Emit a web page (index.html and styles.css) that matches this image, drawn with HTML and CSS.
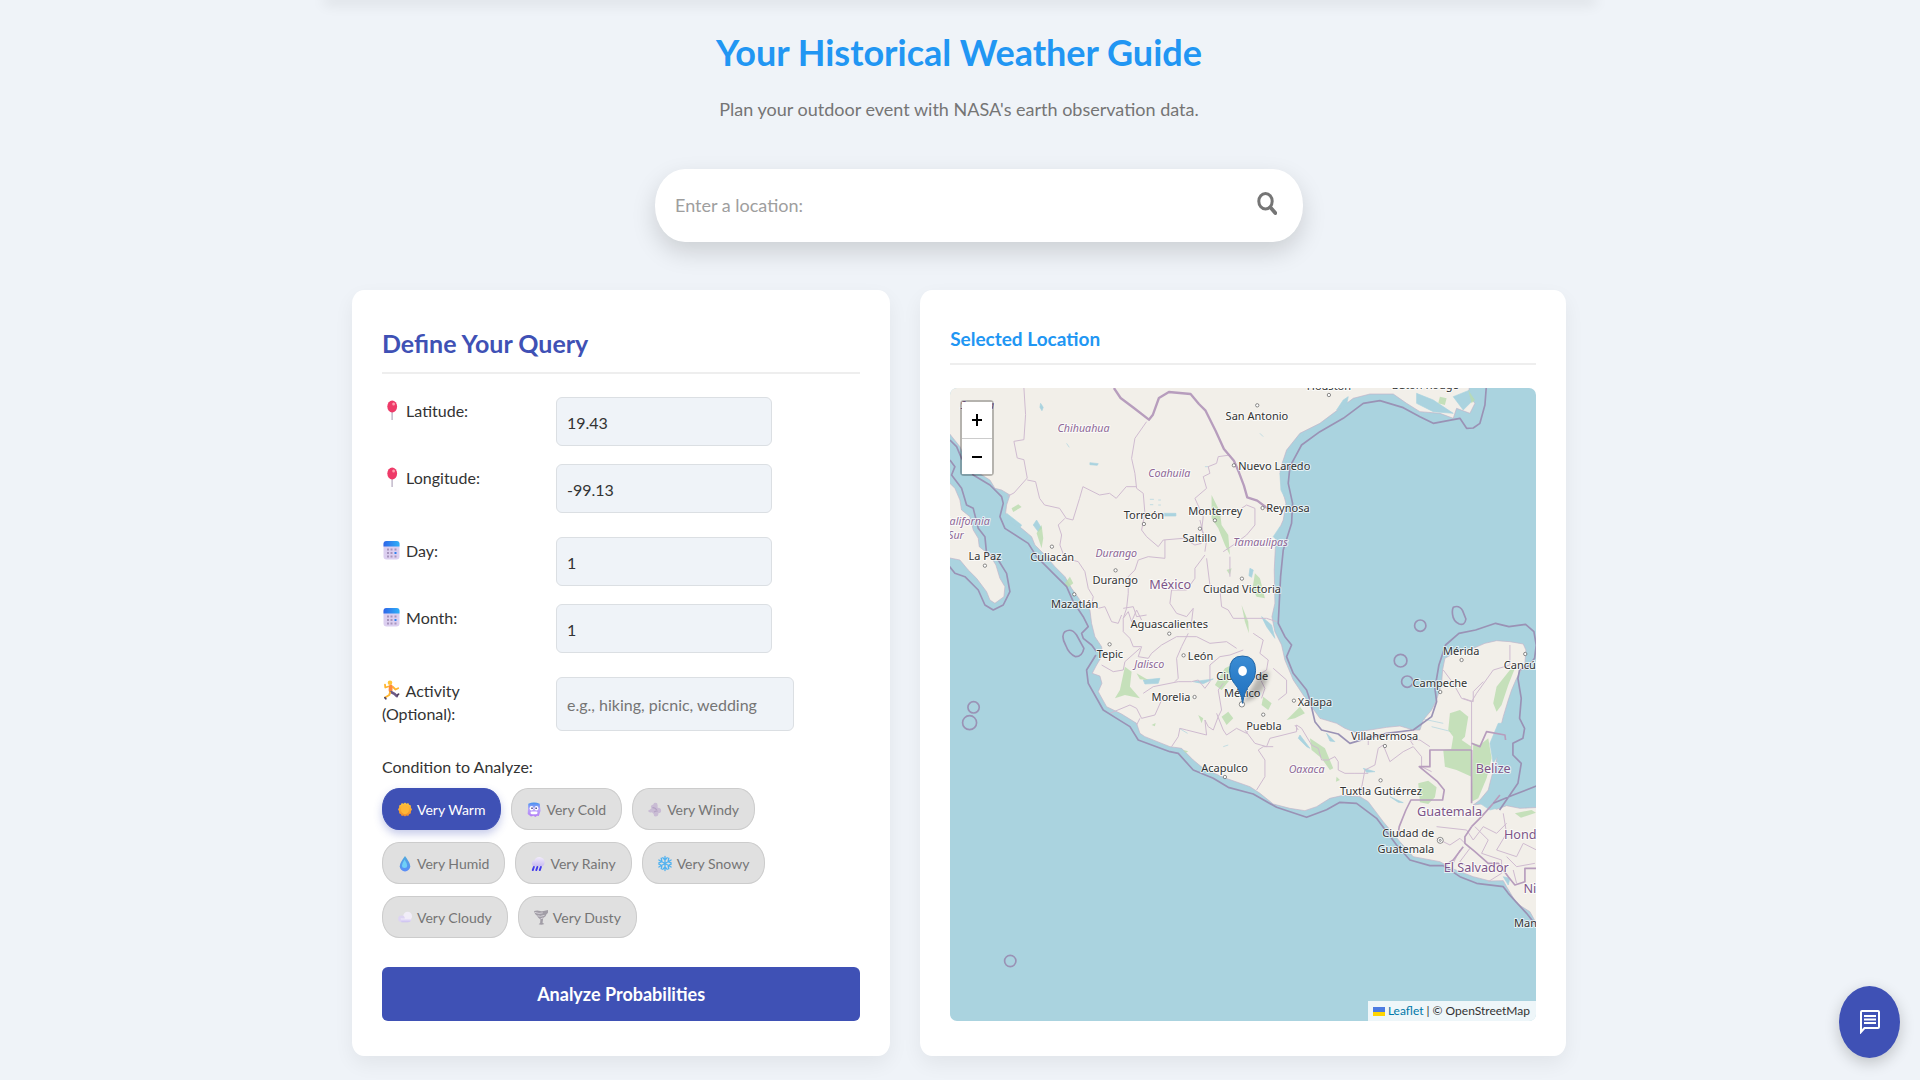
FILE: index.html
```html
<!DOCTYPE html>
<html lang="en">
<head>
<meta charset="utf-8">
<meta name="viewport" content="width=device-width, initial-scale=1">
<title>Your Historical Weather Guide</title>
<link rel="stylesheet" href="styles.css">
</head>
<body>
<svg class="sprite" aria-hidden="true">
  <defs>
    <linearGradient id="g-sun" x1="0" y1="0" x2="0" y2="1"><stop offset="0" stop-color="#ffc83a"/><stop offset="1" stop-color="#f08a2c"/></linearGradient>
    <linearGradient id="g-cold" x1="0" y1="0" x2="0" y2="1"><stop offset="0" stop-color="#3f8ff0"/><stop offset=".45" stop-color="#b9a6fb"/><stop offset="1" stop-color="#b47cf5"/></linearGradient>
    <linearGradient id="g-drop" x1="0" y1="0" x2="0" y2="1"><stop offset="0" stop-color="#4fa9dc"/><stop offset="1" stop-color="#5b8df8"/></linearGradient>
    <linearGradient id="g-cloud" x1="0" y1="0" x2="0" y2="1"><stop offset="0" stop-color="#f2ecfb"/><stop offset="1" stop-color="#c9bdf0"/></linearGradient>
    <linearGradient id="g-cal" x1="0" y1="0" x2="1" y2="0"><stop offset="0" stop-color="#2f66e8"/><stop offset="1" stop-color="#2eb0f8"/></linearGradient>
    <linearGradient id="g-pin" x1="0" y1="0" x2="0" y2="1"><stop offset="0" stop-color="#3a8cd4"/><stop offset="1" stop-color="#1f6fbd"/></linearGradient>
    <symbol id="i-pin" viewBox="0 0 18 20"><path d="M9.500 10h1.200v10h-1.200z" fill="#b3a8bd"/><ellipse cx="10.200" cy="6.500" rx="4.900" ry="6" fill="#ee3a68"/><ellipse cx="11.600" cy="4" rx="1.400" ry="1.600" fill="#ff9cae"/></symbol>
    <symbol id="i-cal" viewBox="0 0 18 20"><rect x="1.500" y="1" width="16" height="18.500" rx="3" fill="#dccff0"/><path d="M1.500 6.500V4q0-3 3-3h10q3 0 3 3v2.500z" fill="url(#g-cal)"/><g fill="#a795bd"><path d="M5 8.500h2v2H5zM8.500 8.500h2v2h-2zM12.500 8.500h2v2h-2zM5 12h2v2H5zM8.500 12h2v2h-2zM5 15.500h2v2H5zM8.500 15.500h2v2h-2zM12.500 15.500h2v2h-2z"/></g><path d="M12.500 12h2v2h-2z" fill="#2f80ee"/></symbol>
    <symbol id="i-run" viewBox="0 0 18 20"><g fill="none" stroke-linecap="round" stroke-linejoin="round"><path d="M6.500 6.500 3.300 7.500 3 4.700M11 7l2.500 2.500 2.700-1.300" stroke="#ffb52e" stroke-width="1.800"/><path d="M8.800 6.500 8.500 10.500" stroke="#ff8a3c" stroke-width="3.800"/><path d="M9 12l3.500 1.800 2.300 2.400" stroke="#6d5a86" stroke-width="2.600"/><path d="M8 12.500 7.300 15l-4.200 2.500" stroke="#ffb52e" stroke-width="2"/><path d="m15.500 15.200 1-1M3 17.800l.8 1" stroke="#51415f" stroke-width="1.800"/></g><circle cx="8" cy="2.800" r="2.300" fill="#ffc53a"/></symbol>
    <symbol id="i-sun" viewBox="0 0 16 18"><path d="m8 1 1.700 1.300 2-.6 1 2 2 .8v2.300L16 9l-1.300 2v2.300l-2 1-1 2-2-.5L8 17l-1.700-1.200-2 .5-1-2-2-1V11L0 9l1.300-2.200V4.500l2-.8 1-2 2 .6z" fill="url(#g-sun)"/><ellipse cx="8" cy="9" rx="4.600" ry="5.300" fill="#ffb636"/></symbol>
    <symbol id="i-cold" viewBox="0 0 16 18"><path d="M1.500 2.500Q8-.5 14.500 2.500l1 8-2 6-2-.5-2 1.700-2-1.500L4.500 17 .8 14z" fill="url(#g-cold)"/><ellipse cx="5.200" cy="7.500" rx="2.200" ry="2.500" fill="#fff"/><ellipse cx="10.800" cy="7.500" rx="2.200" ry="2.500" fill="#fff"/><path d="M5 6.800h1.500v1.700H5zM9.700 6.800h1.500v1.700H9.700z" fill="#332a72"/><rect x="4" y="11.300" width="8" height="3" rx="1.500" fill="#fff"/></symbol>
    <symbol id="i-wind" viewBox="0 0 16 18"><path d="M7 1.500q4-1 4 2.500v3q4 0 4 3t-3 3q0 4-3.500 4-2 0-2-3l-2-2q-3.500 1-4.500-1.500 2-1 4-3-1.500-2 0-3.500 2.500-.5 3-2.500z" fill="#c9bcd4"/><path d="M5 7q3-.5 5 2.500M7 12q2-2 4-1" fill="none" stroke="#b2a0c2" stroke-width="1.300"/></symbol>
    <symbol id="i-drop" viewBox="0 0 16 18"><path d="M8 .5q6 8 6 11.500a6 6 0 0 1-12 0Q2 8.500 8 .5z" fill="url(#g-drop)"/><path d="M7.500 4.500Q4.500 9 4.500 11.500q0 2.500 3 2.500t3-2.500q0-2.500-3-7z" fill="#6fd0f7"/></symbol>
    <symbol id="i-rain" viewBox="0 0 16 18"><path d="M3.500 12a3.300 3.300 0 0 1 .3-6.500Q5.500 1 10 1.500q5.500 1 5.500 6 0 4.500-4 4.500z" fill="url(#g-cloud)"/><path d="m3.300 13-1.300 3.500M7.300 13 6 16.500M11.300 13 10 16.500" stroke="#4339ee" stroke-width="2.200" stroke-linecap="round"/></symbol>
    <symbol id="i-snow" viewBox="0 0 16 18"><g fill="none" stroke="#4fb1f0" stroke-width="1.500" stroke-linecap="round"><path d="M8 1v16M1 5l14 8M15 5 1 13M5.500 2.500 8 5l2.500-2.500M5.500 15.500 8 13l2.500 2.500M1 8.300l3.500-1.400L3.700 3M12.300 15l-.8-3.700L15 9.700M15 8.300l-3.500-1.400.8-3.900M3.700 15l.8-3.700L1 9.700"/></g></symbol>
    <symbol id="i-cloud" viewBox="0 0 16 18"><circle cx="11" cy="7.500" r="5" fill="#f1edf8"/><circle cx="4" cy="10.500" r="3.800" fill="#ddd4f2"/><path d="M3 10h12v1q0 3.500-4 3.500H4z" fill="url(#g-cloud)"/></symbol>
    <symbol id="i-tornado" viewBox="0 0 16 18"><path d="M0 1.500q4-1 7 0t9-1q1 3-2 5 .5 2-3.500 4L9.800 15l2 1.500q-3 1.300-6.500.3l1.700-1.500.3-4Q4 9 3.500 7 .5 5 0 1.500z" fill="#a19da6"/><path d="M1 3.200q5 2 9 .5M4 7q3 1.500 8-.5M7.500 10.500l3-1" fill="none" stroke="#d5d2d9" stroke-width="1.100"/></symbol>
  </defs>
</svg>

<div class="topbar"></div>

<main class="page">
  <header class="hero">
    <h1>Your Historical Weather Guide</h1>
    <p>Plan your outdoor event with NASA's earth observation data.</p>
  </header>

  <form class="search" role="search">
    <input type="search" aria-label="Location" placeholder="Enter a location:">
    <button type="button" aria-label="Search">
      <svg viewBox="0 0 20 23"><ellipse cx="8.500" cy="9.300" rx="6.700" ry="7.700" fill="none" stroke="currentColor" stroke-width="3"/><path d="m13.500 15.500 4.800 5.500" stroke="currentColor" stroke-width="3.800" stroke-linecap="round"/></svg>
    </button>
  </form>

  <div class="columns">
    <form class="card query">
      <h2>Define Your Query</h2>
      <div class="groups">
        <div class="group">
          <div class="row"><label for="lat"><svg><use href="#i-pin"/></svg> Latitude:</label><input id="lat" type="text" value="19.43"></div>
          <div class="row"><label for="lon"><svg><use href="#i-pin"/></svg> Longitude:</label><input id="lon" type="text" value="-99.13"></div>
        </div>
        <div class="group">
          <div class="row"><label for="day"><svg><use href="#i-cal"/></svg> Day:</label><input id="day" type="text" value="1"></div>
          <div class="row"><label for="month"><svg><use href="#i-cal"/></svg> Month:</label><input id="month" type="text" value="1"></div>
        </div>
        <div class="row wide"><label for="activity"><svg><use href="#i-run"/></svg> Activity (Optional):</label><input id="activity" type="text" placeholder="e.g., hiking, picnic, wedding"></div>
        <div class="conditions" role="group" aria-labelledby="cond">
          <p id="cond">Condition to Analyze:</p>
          <div class="chips">
            <button type="button" class="chip active" aria-pressed="true"><svg><use href="#i-sun"/></svg>Very Warm</button>
            <button type="button" class="chip"><svg><use href="#i-cold"/></svg>Very Cold</button>
            <button type="button" class="chip"><svg><use href="#i-wind"/></svg>Very Windy</button>
            <button type="button" class="chip"><svg><use href="#i-drop"/></svg>Very Humid</button>
            <button type="button" class="chip"><svg><use href="#i-rain"/></svg>Very Rainy</button>
            <button type="button" class="chip"><svg><use href="#i-snow"/></svg>Very Snowy</button>
            <button type="button" class="chip"><svg><use href="#i-cloud"/></svg>Very Cloudy</button>
            <button type="button" class="chip"><svg><use href="#i-tornado"/></svg>Very Dusty</button>
          </div>
        </div>
      </div>
      <button type="submit" class="analyze">Analyze Probabilities</button>
    </form>

    <section class="card location">
      <h3>Selected Location</h3>
      <div class="map">
        <svg class="tiles" viewBox="30 54 1758 1899" preserveAspectRatio="xMidYMid slice" role="img" aria-label="Map of Mexico">
          <path id="land" fill="#f2efe9" stroke="#c3b3c9" stroke-width="2" stroke-linejoin="round" d="M20 40V180L60 230 85 285 110 305 150 330 165 355 185 360 210 375 200 405 197 430 215 455 245 475 275 500 285 525 310 550 345 590 375 620 395 655 420 690 450 720 455 760 465 800 485 830 488 855 470 885 457 910 480 918 486 940 475 965 500 1010 545 1032 590 1060 600 1090 615 1100 690 1130 725 1135 760 1170 790 1195 850 1222 930 1250 960 1270 1000 1302 1050 1315 1095 1322 1130 1310 1170 1285 1210 1276 1260 1280 1285 1295 1330 1355 1380 1415 1420 1460 1500 1475 1540 1497 1600 1520 1650 1533 1690 1532 1700 1550 1730 1600 1770 1625 1800 1680V1312L1740 1315 1700 1307 1670 1318 1640 1300 1600 1305 1620 1290 1645 1260 1655 1220 1670 1170 1675 1100 1690 1040 1705 990 1715 960 1730 925 1755 880 1758 840 1750 822 1710 815 1670 812 1635 820 1600 835 1545 848 1515 865 1508 900 1505 940 1490 990 1475 1020 1450 1050 1440 1080 1420 1080 1380 1068 1340 1072 1290 1080 1245 1087 1215 1075 1190 1060 1140 1045 1115 1010 1090 975 1060 930 1035 870 1025 825 1005 785 996 740 1005 700 1003 600 1008 500 1030 450 1038 400 1025 350 1020 300 1040 240 1080 190 1140 160 1200 115 1240 85 1290 72 1360 72 1400 100 1440 125 1500 130 1540 145 1550 115 1590 130 1605 100 1585 75 1590 40ZM20 330L45 355 60 390 65 420 90 440 100 480 115 505 118 530 150 556 168 585 180 625 195 650 192 680 165 700 150 690 140 665 110 625 85 600 60 570 20 562Z"/>

          <g class="water">
            <path d="M290 450l15 25-10 10-15-20zM200 430l45 35-5 8-40-22zM1020 310l18-25 3 50-8 45-10-20zM1040 250l30-40 35-25 30-5-40 30-35 40zM1190 120l20-30 15-10-5 25zM1000 500l20-30 5 15-15 25zM1430 70l50 20 60 40-60-5-50-25zM1540 80l50-20 10 30-30 30zM965 740l30 25 10 40-25-35zM610 930l50-5-5 15-40 2zM670 430h38v8h-38zM450 278l25 3-3 5-22-2zM302 100l8 12-4 10-6-10zM930 595l10 5-5 22-8-5zM1080 1095l30 40-10-5-25-25zM1160 1090l25 25-15-2zM1270 1195l35 10-25 2zM1350 1280l40 18-15-1zM1690 1060l8 30-20 60-18 30-10-60 25-60zM1620 1300l40-10 10 25-20 5zM1750 920l-20 35-5-15zM1690 1520l20 5-5 20zM760 935l60-8-30 14z"/>
            <path d="M630 388h12M630 404h10M655 390h8M655 405h8M380 220l8 12M795 290h10M960 190l10 10M560 1120l40-5M718 1075l25 15M850 1130l15-5M1440 1045l70 15M1475 1070l60 15"/>
          </g>
          <g class="green">
            <path d="M215 415l20-12 10 8-25 15zM290 490l15-25 5 40-5 30zM375 640l15-20 10 20-15 12zM815 375l25 50 5 40 20 30 5 60-15-30-20-50-20-30zM860 600l15-5-5 20zM945 610l15 15 15 60-25-5-12-25zM905 705l20 50 2 35-12-35zM555 890l20 15-5 45 30 35-45-10-30 10 15-25zM590 910l35 20-25-2zM825 945l30-50 20-10 15-20 5 30-10 20-20 20-20 25zM845 1040l20-15 15 20-20 20zM775 1035l15 10-5 15zM1110 1105l45 30 25 60-10 5-25-35-30-25zM1530 1030l30-10 25 20-10 60-10 10 30 20v60l-20 20-40-20-5-30 10-60-15-20zM1510 1140l85-10v90l-45-20-35-10zM1435 1240l30-8 25 20-5 30-20 20-25-5zM1600 1120l20 5 25-20 10 60-15 60-25 60-20 10zM1660 1000l10-50 40-50 15-5-20 50-20 60-15 20zM1500 80l20 5-5 20-20-5zM1585 60l20 30-10 10zM1725 1330l50-10 13 8-45 15zM1040 1050l40-40 15 20-30 15zM1190 1220l10 10-12 5zM635 1065l12-6-2 10zM730 1140l15 4-8 5zM970 980l25 20-10 20-20-15z"/>
          </g>
          <g class="states">
            <path d="M252 54l5 80-5 75-30 5 10 50 20 5 10 55-40 45-20 10M262 330l25 5 12 50 15 20 45 10 20 30 20 5 20-65 10-35 50 25 30-5 20 15 30-35 30 0M590 355l-5-45-10-45 10-60 35-50M590 355l20 15 5 60-10 50 15 20 35 30 15-20 60-5 35 20 20-5M795 545l5-35-15-30 5-40-25-55 35-30-10-35 20-10-5-20 25-10 5-20 35-5M375 445l-20 20 10 30-5 30 15 40 40 10 20 30 10 50 15 25-5 25 20 10 20-5 20 45 20 5 10-25M585 600l10-30 30-10 50 5 0-55M585 600l-20 20 0 50-5 45-10 30M795 555l-30 40 0 30-25 35-45 0-5 40 20 30 30 10 20-25-5 40-15 25M800 565l10 80 30 15 5 50 20 10 15 25 40 0 60 0 30 10M550 715l30-5 10 30 30-5M550 745l15-20 10 30 15-35 15 30M550 745l0 40 20 20 10 25 25 0-10 30 30 5 10-15 30-25 45-25 10 0 50 0 40 20 50-5 30 20M745 790l-20 40-15 35 5 60-10 10M600 835l-45 40-5 25-30 5-35-20M715 935l40 0 20-5 20 25 15-20 0-50 30-25 30-5 40-15M640 950l-30 20M510 1030l60-25 20 10 15 30 40-10 20-45M600 1045l-10 20M640 950l75-15M695 1130l20-30 5-25 20 5 60 15-5-45 10 20 15 10 15-40 10-20-10-60 15-20M830 1030l20 50 10 15 30-20 30 15 10-35M915 1080l30 40 35 10 10-25 60-15 20-5 0-20 15 10 30 50 20 10 10 35 20 0 20-10 10 15 0 25 20 10 30 0 40 0M1075 1080l-10-15M950 1260l25-40 0-50-20-30 15-10 30 0M1260 1280l15-80 30-15 10-50 15-10 20 50 40-30 30-15 25 30 0 30 30 15M1420 1125l-10-15 30 0 30 20M1265 1085l20 20 0 20M1510 900l30 40 25 45 30 10 15-25 50-70 50-15 0-60M1570 985l30 10 0-30 30-30M1595 995v145M940 790l30 20-10 40 25 20-5 30-25 15 20 40-10 30M1000 895l40 35 0 40-25 20M945 415l0 50-25 30-40 30-30 20M870 560l0 60M790 490l-10-40M905 415l15-10 25 10M1490 1370l90 10 20 30 30-40 40 20 30-30M1490 1405l40 20 30-20 30 30-30 40 30 20M1605 1370l40 40-20 40 60 20 0 40-40 25M1690 1330l10 60-30 50 60 20 20-40 40 20M1700 1460l30 30 55-10M1560 1440l-20 40M1720 1500l10 40"/>
          </g>
          <g class="borders">
            <path class="nation" d="M522 54l20 30 40 30 45 35 12-15 18-50 30-18 65 6 25 30 20 20 30 60 25 55 30 35 15 35 15 40 10 35 30 10 40 30"/>
            <path d="M1595 1140h-125v50h-32l55 45 20 25-5 30h-95l-15 30-20 50-5 30M1595 1140v160M1595 1120l25 10 20-45 55 10 2 15M1595 1370l30-30 35-40 20-25M1595 1370l-20 30 0 20 30 25 40 35 30 0 30 40 20 25 30-10 0-40 40 0M1570 1430l-30 40-30 20"/>
          </g>
          <g class="limits">
            <path d="M30 210l20 20 15 35 35 50 50 30 35 35 5 20-10 40 15 35 70 45 25 40 50 50 40 40 20 45 30 45 15 30-20 20 5 15 25 20 15 20M30 270l15 20-10 25 30 40 15 50 20 10 15 60 20 25 5 50 35 20 25 40 10 55-20 40-30 15-25-15-20-45-40-40-30-10-20-25M468 855l-28 45 5 40 45 80 40 25 40 25 25 40 95 35 25 5 45 50 60 25 45 27 75 20 70 40 90 30 60-23 40-22 50 3 60 45 30 40 30 40 40 45 60 17 40 0 50 33 50 20 80 10 15 20 55 60 35 45M1640 40l-5 65-15 55-20 14-20 1-20-30-80 15-40-20-50-27-70-21-50 8-60 45-70 40-55 40-35 65-5 50 13 60-3 60-25 80-8 80-4 80-3 60 20 40 20 25-15 35 20 50 40 50 10 30 15 65 20 25 50 12 35 28 50-15 60-15 80-10 55-40 15-45-5-40 12-70 20-60 40-35 50-10 60-20 40 10 50-7 25 22 7 40-5 40-20 25-25 10-5 25 10 60-5 60 15 30-5 30-30 15 0 35 25 25-10 60-55 80M1660 1300l60-25 70-27"/>
            <path d="M375 785q20-12 35 10l22 40q-5 25-25 25-20-8-30-35-15-28-2-40zM1540 712q18-8 28 10l10 25q-3 20-20 15-18-8-20-28-2-15 2-22z"/>
            <circle cx="1441" cy="767" r="17"/><circle cx="1382" cy="872" r="19"/><circle cx="1402" cy="935" r="17"/><circle cx="101" cy="1012" r="17"/><circle cx="89" cy="1058" r="21"/><circle cx="211" cy="1773" r="17"/>
          </g>
          <g class="towns">
            <circle cx="1167" cy="75" r="5"/><circle cx="952" cy="106" r="5"/><circle cx="882" cy="286" r="5"/><circle cx="968" cy="414" r="5"/><circle cx="825" cy="451" r="5"/><circle cx="612" cy="462" r="5"/><circle cx="780" cy="476" r="5"/><circle cx="336" cy="530" r="5"/><circle cx="135" cy="587" r="5"/><circle cx="527" cy="601" r="5"/><circle cx="906" cy="626" r="5"/><circle cx="403" cy="673" r="5"/><circle cx="688" cy="791" r="5"/><circle cx="509" cy="823" r="5"/><circle cx="731" cy="856" r="5"/><circle cx="1565" cy="870" r="5"/><circle cx="1756" cy="852" r="5"/><circle cx="1501" cy="966" r="5"/><circle cx="764" cy="981" r="5"/><circle cx="1062" cy="992" r="5"/><circle cx="970" cy="1034" r="5"/><circle cx="855" cy="1221" r="5"/><circle cx="1335" cy="1128" r="5"/><circle cx="1322" cy="1231" r="5"/><circle cx="1501" cy="1411" r="9"/><circle cx="1501" cy="1411" r="3"/><circle cx="906" cy="1003" r="8"/>
          </g>
          <g class="city">
            <text x="1167" y="60">Houston</text><text x="1456" y="56">Baton Rouge</text><text x="951" y="150">San Antonio</text><text x="1003" y="299">Nuevo Laredo</text><text x="1044" y="427">Reynosa</text><text x="826" y="435">Monterrey</text><text x="612" y="448">Torreón</text><text x="779" y="517">Saltillo</text><text x="337" y="573">Culiacán</text><text x="135" y="571">La Paz</text><text x="526" y="643">Durango</text><text x="906" y="668">Ciudad Victoria</text><text x="404" y="715">Mazatlán</text><text x="688" y="774">Aguascalientes</text><text x="510" y="865">Tepic</text><text x="782" y="869">León</text><text x="1564" y="854">Mérida</text><text x="1750" y="897">Cancún</text><text x="1500" y="951">Campeche</text><text x="693" y="992">Morelia</text><text x="1125" y="1008">Xalapa</text><text x="972" y="1079">Puebla</text><text x="854" y="1207">Acapulco</text><text x="1334" y="1111">Villahermosa</text><text x="1323" y="1275">Tuxtla Gutiérrez</text><text x="1405" y="1401">Ciudad de</text><text x="1398" y="1449">Guatemala</text><text x="907" y="930">Ciudad de</text><text x="907" y="980">México</text><text x="1766" y="1670">Mana</text>
          </g>
          <g class="state-name">
            <text x="431" y="185">Chihuahua</text><text x="688" y="322">Coahuila</text><text x="529" y="560">Durango</text><text x="962" y="529">Tamaulipas</text><text x="628" y="895">Jalisco</text><text x="1100" y="1210">Oaxaca</text><text x="80" y="466">California</text><text x="48" y="508">Sur</text><text x="112" y="116">Sonora</text>
          </g>
          <g class="country">
            <text x="691" y="657">México</text><text x="1660" y="1208">Belize</text><text x="1529" y="1337">Guatemala</text><text x="1609" y="1505">El Salvador</text><text x="1780" y="1408">Honduras</text><text x="1842" y="1570">Nicaragua</text>
          </g>
          <path class="pin-shadow" d="M908 1000l35-60q15-40 45-35-5 50-45 80z"/>
          <path d="M908 1000q-5-38-25-60-14-16-14-38 0-44 39-44t39 44q0 22-14 38-20 22-25 60z" fill="url(#g-pin)" stroke="#2368a8" stroke-width="3"/>
          <ellipse cx="908" cy="903" rx="13" ry="15" fill="#fff"/>
        </svg>
        <div class="zoom"><button type="button" aria-label="Zoom in"><svg viewBox="0 0 12 14"><path d="M6 1v12M1 7h10"/></svg></button><button type="button" aria-label="Zoom out"><svg viewBox="0 0 12 14"><path d="M1 7h10"/></svg></button></div>
        <div class="credit"><span class="flag"></span><a href="#">Leaflet</a> | © OpenStreetMap</div>
      </div>
    </section>
  </div>
</main>

<button type="button" class="chat" aria-label="Open chat">
  <svg viewBox="0 0 20 24"><path d="M1 22V2q0-1 1-1h16q1 0 1 1v15q0 1-1 1H4.500z" fill="none" stroke="currentColor" stroke-width="2"/><path d="M4 6h12M4 9.500h12M4 13h12" stroke="currentColor" stroke-width="2"/></svg>
</button>
</body>
</html>
```

FILE: styles.css
```css
* { box-sizing: border-box; }

body {
  margin: 0;
  background: #eff3f8;
  color: #333;
  font-family: Lato, "Liberation Sans", sans-serif;
  font-size: 16px;
  line-height: 23px;
}

h1, h2, h3, p { margin: 0; }
input, button { font: inherit; color: inherit; }
button { cursor: pointer; }

.sprite { position: absolute; width: 0; height: 0; }

.topbar {
  max-width: 1264px;
  margin: 0 auto;
  box-shadow: 0 0 14px 4px rgba(0, 0, 0, .1);
}

.page {
  max-width: 1216px;
  margin: 0 auto;
  padding: 27px 2px 23px 0;
}

.hero { text-align: center; }
.hero h1 {
  color: #2196f3;
  font-size: 36px;
  line-height: 50px;
}
.hero p {
  margin-top: 19px;
  color: #757575;
  font-size: 18px;
  line-height: 26px;
}

.search {
  display: flex;
  align-items: center;
  width: 648px;
  max-width: 100%;
  height: 73px;
  margin: 47px auto 48px;
  padding: 0 26px 0 20px;
  background: #fff;
  border-radius: 30px / 36px;
  box-shadow: 0 10px 25px rgba(0, 0, 0, .15);
  transform: translateX(20px);
}
.search input {
  flex: 1;
  min-width: 0;
  padding: 0;
  border: 0;
  outline: 0;
  background: none;
  font-size: 18px;
}
.search input::placeholder { color: #9e9e9e; opacity: 1; }
.search button {
  display: flex;
  padding: 0 0 4px;
  border: 0;
  background: none;
  color: #757575;
}
.search svg { width: 20px; height: 23px; }

.columns {
  display: grid;
  grid-template-columns: 1fr 1.2fr;
  gap: 30px;
}

.card {
  display: flex;
  flex-direction: column;
  min-width: 0;
  padding: 36px 30px 35px;
  background: #fff;
  border-radius: 12px / 14px;
  box-shadow: 0 8px 20px rgba(0, 0, 0, .06);
}

.card h2 {
  padding-bottom: 12px;
  border-bottom: 2px solid #eee;
  color: #3f51b5;
  font-size: 25px;
  line-height: 34px;
}
.card h3 {
  padding-bottom: 11px;
  border-bottom: 2px solid #eee;
  color: #2196f3;
  font-size: 19px;
  line-height: 26px;
}

.groups {
  display: flex;
  flex-direction: column;
  gap: 24px;
  margin: 23px 0 29px;
}
.group {
  display: flex;
  flex-direction: column;
  gap: 18px;
}
.row {
  display: grid;
  grid-template-columns: 144px 216px;
  column-gap: 30px;
  align-items: start;
}
.row.wide { grid-template-columns: 144px 238px; }
.row label { padding-top: 2px; }
.row.wide label { padding-right: 40px; }
.row svg {
  width: 18px;
  height: 20px;
  margin-right: 2px;
  vertical-align: -3px;
}
.row input {
  width: 100%;
  height: 49px;
  padding: 1px 10px 0;
  border: 1px solid #dbdfe3;
  border-radius: 6px;
  background: #eff3f8;
}
.row.wide input { height: 54px; }
.row input::placeholder { color: #757575; opacity: 1; }

.conditions p { margin-bottom: 10px; }
.chips {
  display: flex;
  flex-wrap: wrap;
  gap: 12px 10px;
  max-width: 400px;
}
.chip {
  display: flex;
  align-items: center;
  gap: 5px;
  height: 42px;
  padding: 0 15px;
  border: 1px solid #ccc;
  border-radius: 17px / 20px;
  background: #e0e0e0;
  color: #757575;
  font-size: 14px;
}
.chip svg { width: 14px; height: 17px; }
.chip.active {
  border-color: #3f51b5;
  background: #3f51b5;
  color: #fff;
  box-shadow: 0 4px 8px rgba(63, 81, 181, .3);
}

.analyze {
  height: 54px;
  margin-top: auto;
  border: 0;
  border-radius: 6px;
  background: #3f51b5;
  color: #fff;
  font-size: 18px;
  font-weight: 700;
}

.map {
  position: relative;
  flex: 1;
  min-height: 400px;
  margin-top: 23px;
  overflow: hidden;
  border-radius: 7px;
  background: #aad3df;
}
.tiles {
  position: absolute;
  inset: 0;
  width: 100%;
  height: 100%;
}
.water { fill: #aad3df; stroke: #aad3df; stroke-width: 2; }
.green { fill: #b9dcae; opacity: .8; }
.states { fill: none; stroke: #cfbbd0; stroke-width: 3; stroke-linejoin: round; }
.borders { fill: none; stroke: #b79dbd; stroke-width: 5; stroke-linejoin: round; }
.borders .nation { stroke-width: 7; }
.limits { fill: none; stroke: #9a92b5; stroke-width: 5; stroke-linejoin: round; }
.towns { fill: #fff; stroke: #555; stroke-width: 2; }
.pin-shadow { fill: #000; opacity: .25; filter: blur(6px); }
.tiles text {
  font-family: "Noto Sans", sans-serif;
  text-anchor: middle;
  paint-order: stroke;
  stroke: rgba(255, 255, 255, .7);
  stroke-width: 6px;
  stroke-linejoin: round;
}
.city { font-size: 33px; fill: #333; }
.state-name { font-size: 32px; font-style: italic; fill: #8d6796; }
.country { font-size: 38px; fill: #7d5588; }

.zoom {
  position: absolute;
  top: 12px;
  left: 10px;
  display: flex;
  flex-direction: column;
  border: 2px solid rgba(0, 0, 0, .25);
  border-radius: 4px;
  background-clip: padding-box;
}
.zoom button {
  display: grid;
  place-items: center;
  width: 30px;
  height: 36px;
  padding: 0;
  border: 0;
  background: #fff;
}
.zoom button + button { border-top: 1px solid #ccc; }
.zoom svg { width: 12px; height: 14px; stroke: #000; stroke-width: 2; fill: none; }

.credit {
  position: absolute;
  right: 0;
  bottom: 0;
  display: flex;
  align-items: center;
  gap: 3px;
  padding: 0 6px 0 5px;
  background: rgba(255, 255, 255, .8);
  font-size: 12px;
  line-height: 20px;
}
.credit a { color: #0078a8; text-decoration: none; }
.flag {
  width: 12px;
  height: 9px;
  background: linear-gradient(#4c7be1 50%, #ffd500 50%);
}

.chat {
  position: fixed;
  right: 20px;
  bottom: 22px;
  display: grid;
  place-items: center;
  width: 61px;
  height: 72px;
  padding: 0;
  border: 0;
  border-radius: 50%;
  background: #3f51b5;
  color: #fff;
  box-shadow: 0 5px 15px rgba(0, 0, 0, .2);
}
.chat svg { width: 20px; height: 24px; }
```
